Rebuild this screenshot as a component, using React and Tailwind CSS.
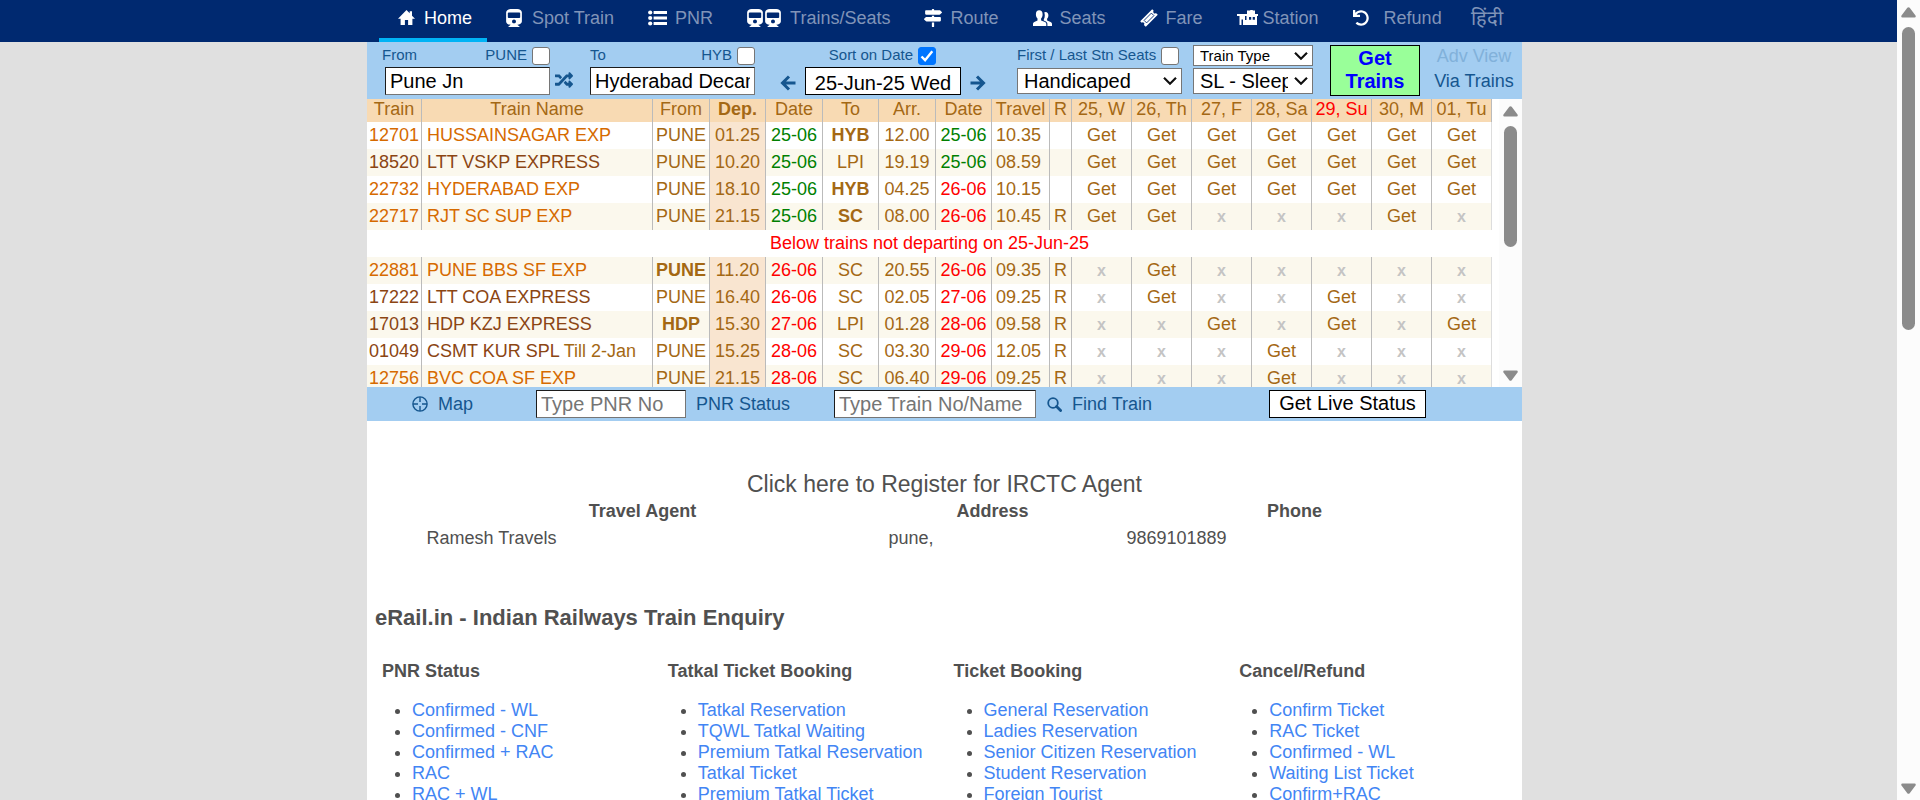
import React from "react";
import { FaTrain, FaMapSigns, FaRandom, FaUndo } from "react-icons/fa";

const HomeIcon = () => (
  <svg width="17" height="16" viewBox="0 0 17 16" fill="currentColor" aria-hidden="true">
    <path d="M8.5 0 0 8.8h2.6V15h4.3v-5h3.2v5h4.3V8.8H17l-3-3.1V1.2h-2.3v2.1z" />
  </svg>
);

const ListIcon = () => (
  <svg width="20" height="16" viewBox="0 0 20 16" fill="currentColor" aria-hidden="true">
    <circle cx="2.2" cy="2.5" r="2.1" />
    <circle cx="2.2" cy="8" r="2.1" />
    <circle cx="2.2" cy="13.500" r="2.1" />
    <path d="M5.6 1h13.4v3H5.6zM5.6 6.500h13.4v3H5.6zM5.6 12h13.4V15H5.6z" />
  </svg>
);

const TrainIcon = () => <FaTrain className="h-[18px] w-4" aria-hidden="true" />;

const UsersIcon = () => (
  <svg width="19" height="17" viewBox="0 0 19 17" fill="currentColor" aria-hidden="true">
    <path d="M12.600 2c1.700 0 2.800 1.300 2.800 3.300 0 1.600-.5 2.700-1.300 3.500v1.700l3.500 1.500c.9.500 1.400 1.100 1.400 2.100V16h-4.600v-2c0-1.200-.7-2.100-1.900-2.700l-1.700-.8V9.300c.6-1 1-2.300 1-3.900 0-1.100-.2-2-.6-2.800.4-.4.900-.6 1.400-.6z" />
    <path d="M6.200.2c2.200 0 3.400 1.600 3.400 4 0 2-.6 3.500-1.500 4.400v1.900l3.900 1.600c.9.500 1.300 1.100 1.300 2.100V16H0v-1.800c0-1 .4-1.600 1.300-2.100l3.200-1.600V8.600C3.500 7.700 2.900 6.200 2.900 4.200 2.900 1.800 4.100.2 6.200.2z" />
  </svg>
);

const TicketIcon = () => (
  <svg width="18" height="18" viewBox="0 0 18 18" fill="none" aria-hidden="true">
    <path fill="currentColor" d="M12.200.2l1.500 1.500a1.500 1.500 0 0 0 2.200 2.200l1.900 1.900L5.800 17.800l-1.900-1.900a1.500 1.500 0 0 0-2.200-2.200L.2 12.200z" />
    <path stroke="#002970" strokeWidth=".9" d="M11.400 4.100l2.500 2.500-7.300 7.300-2.500-2.500z" />
  </svg>
);

const StationIcon = () => (
  <svg width="21" height="16" viewBox="0 0 21 16" fill="currentColor" aria-hidden="true">
    <path d="M10 .5h3l.5-.5h2l.500.500H18V4h3v2H0V4h10z" />
    <path d="M2.500 6H8v9H6V9.500H4.500V15h-2z" />
    <path fillRule="evenodd" d="M9.500 6H20v9H8v-5h1.500zM12 7v2.800h2.200V7zm3.700 0v2.800h2.200V7z" />
  </svg>
);

const TargetIcon = () => (
  <svg width="16" height="16" viewBox="0 0 16 16" fill="none" stroke="currentColor" strokeWidth="1.400" aria-hidden="true">
    <circle cx="8" cy="8" r="7.100" />
    <path d="M8 1v5M8 10v5M1 8h5M10 8h5" />
  </svg>
);

const SearchIcon = () => (
  <svg width="15" height="15" viewBox="0 0 15 15" fill="none" stroke="currentColor" aria-hidden="true">
    <circle cx="6" cy="6" r="4.800" strokeWidth="1.800" />
    <path d="M9.600 9.600l4 4" strokeWidth="2.800" strokeLinecap="round" />
  </svg>
);

const ArrowIcon = ({ d }) => (
  <svg width="16" height="16" viewBox="0 0 16 16" fill="none" stroke="currentColor" strokeWidth="3" aria-hidden="true">
    <path d={d} />
  </svg>
);

const NAV = [
  { label: "Home", box: "w-[26px]", icon: <HomeIcon />, active: true },
  { label: "Spot Train", box: "w-[26px]", icon: <TrainIcon /> },
  { label: "PNR", box: "w-[27px]", icon: <ListIcon /> },
  { label: "Trains/Seats", box: "w-[43px]", icon: <><TrainIcon /><TrainIcon /></> },
  { label: "Route", box: "w-[26px]", icon: <FaMapSigns className="size-[18px]" aria-hidden="true" /> },
  { label: "Seats", box: "w-[27px]", icon: <UsersIcon /> },
  { label: "Fare", box: "w-[26px]", icon: <TicketIcon /> },
  { label: "Station", box: "w-[26px]", icon: <StationIcon /> },
  { label: "Refund", box: "w-[31px]", icon: <FaUndo className="size-4" aria-hidden="true" /> },
];

const DAYS = ["25, W", "26, Th", "27, F", "28, Sa", "29, Su", "30, M", "01, Tu"];

const TRAINS = [
  { no: "12701", name: "HUSSAINSAGAR EXP", sf: true, from: "PUNE", dep: "01.25", d1: "25-06", to: "HYB", toB: true, arr: "12.00", d2: "25-06", t: "10.35", r: "", days: "1111111" },
  { no: "18520", name: "LTT VSKP EXPRESS", from: "PUNE", dep: "10.20", d1: "25-06", to: "LPI", arr: "19.19", d2: "25-06", t: "08.59", r: "", days: "1111111" },
  { no: "22732", name: "HYDERABAD EXP", sf: true, from: "PUNE", dep: "18.10", d1: "25-06", to: "HYB", toB: true, arr: "04.25", d2: "26-06", t: "10.15", r: "", days: "1111111" },
  { no: "22717", name: "RJT SC SUP EXP", sf: true, from: "PUNE", dep: "21.15", d1: "25-06", to: "SC", toB: true, arr: "08.00", d2: "26-06", t: "10.45", r: "R", days: "1100010" },
  null,
  { no: "22881", name: "PUNE BBS SF EXP", sf: true, from: "PUNE", fromB: true, dep: "11.20", d1: "26-06", to: "SC", arr: "20.55", d2: "26-06", t: "09.35", r: "R", days: "0100000" },
  { no: "17222", name: "LTT COA EXPRESS", from: "PUNE", dep: "16.40", d1: "26-06", to: "SC", arr: "02.05", d2: "27-06", t: "09.25", r: "R", days: "0100100" },
  { no: "17013", name: "HDP KZJ EXPRESS", from: "HDP", fromB: true, dep: "15.30", d1: "27-06", to: "LPI", arr: "01.28", d2: "28-06", t: "09.58", r: "R", days: "0010101" },
  { no: "01049", name: "CSMT KUR SPL", note: "Till 2-Jan", from: "PUNE", dep: "15.25", d1: "28-06", to: "SC", arr: "03.30", d2: "29-06", t: "12.05", r: "R", days: "0001000" },
  { no: "12756", name: "BVC COA SF EXP", sf: true, from: "PUNE", dep: "21.15", d1: "28-06", to: "SC", arr: "06.40", d2: "29-06", t: "09.25", r: "R", days: "0001000" },
];

const LINKS = [
  { title: "PNR Status", items: ["Confirmed - WL", "Confirmed - CNF", "Confirmed + RAC", "RAC", "RAC + WL"] },
  { title: "Tatkal Ticket Booking", items: ["Tatkal Reservation", "TQWL Tatkal Waiting", "Premium Tatkal Reservation", "Tatkal Ticket", "Premium Tatkal Ticket"] },
  { title: "Ticket Booking", items: ["General Reservation", "Ladies Reservation", "Senior Citizen Reservation", "Student Reservation", "Foreign Tourist"] },
  { title: "Cancel/Refund", items: ["Confirm Ticket", "RAC Ticket", "Confirmed - WL", "Waiting List Ticket", "Confirm+RAC"] },
];

function Check({ children, checked = false }) {
  return (
    <label className="flex items-center gap-[5px]">
      <span>{children}</span>
      <span className="relative block size-[18px]">
        <input
          type="checkbox"
          defaultChecked={checked}
          className="peer block size-[18px] appearance-none rounded-[3px] border border-[#767676] bg-white checked:border-[#0075ff] checked:bg-[#0075ff]"
        />
        <svg viewBox="0 0 18 18" fill="none" stroke="#fff" strokeWidth="2.400" className="pointer-events-none absolute inset-0 hidden size-[18px] peer-checked:block" aria-hidden="true">
          <path d="M3.500 9.500l3.600 3.700 7.200-9" />
        </svg>
      </span>
    </label>
  );
}

function Select({ label, value, className }) {
  return (
    <span className="relative block w-full">
      <select aria-label={label} defaultValue={value} className={`block w-full appearance-none border border-[#767676] bg-white py-0 pl-[6px] pr-6 text-black ${className}`}>
        <option>{value}</option>
      </select>
      <svg viewBox="0 0 14 9" fill="none" stroke="#111" strokeWidth="2.200" className="pointer-events-none absolute right-[5px] top-1/2 h-[9px] w-[14px] -translate-y-1/2" aria-hidden="true">
        <path d="M1 1.200l6 6 6-6" />
      </svg>
    </span>
  );
}

function ScrollBar({ thumb, className }) {
  return (
    <div aria-hidden="true" className={`flex w-[23px] shrink-0 flex-col items-center bg-[#fcfcfc] ${className}`}>
      <svg width="15" height="11" viewBox="0 0 15 11" fill="#8b8b8b" className="mb-[9px] shrink-0">
        <path d="M6.300.8q1.200-1.200 2.400 0L14.500 8.600q.8 1.900-1 1.900H1.500q-1.800 0-1-1.900z" />
      </svg>
      <div className={`w-[13px] shrink-0 rounded-full bg-[#8b8b8b] ${thumb}`} />
      <svg width="15" height="11" viewBox="0 0 15 11" fill="#8b8b8b" className="mt-auto shrink-0">
        <path d="M6.300 10.200q1.200 1.200 2.400 0L14.500 2.400q.8-1.900-1-1.900H1.500q-1.800 0-1 1.900z" />
      </svg>
    </div>
  );
}

const FIELD = "block h-7 w-full border border-[#767676] border-l-[#1c1c1c] border-t-[#1c1c1c] bg-white px-1 text-[20px] text-black placeholder:text-[#757575]";
const LABEL_ROW = "flex h-[25px] items-center whitespace-nowrap pt-[2px]";

function NavBar() {
  return (
    <nav className="flex h-[42px] justify-center bg-[#002970] pr-2 text-[18px]">
      <div className="flex w-full max-w-[1155px] pl-3">
        {NAV.map((n) => (
          <a
            key={n.label}
            href="#"
            className={`flex items-center whitespace-nowrap border-b-4 pl-[19px] pr-[15px] pb-[2px] ${n.active ? "border-[#00b3f5] text-white" : "border-transparent text-[#8094b8]"}`}
          >
            <span className={`flex gap-[2px] text-white ${n.box}`}>{n.icon}</span>
            {n.label}
          </a>
        ))}
        <a href="#" lang="hi" className="flex items-center pb-[6px] pl-[14px] text-[20px] text-[#8094b8]">हिंदी</a>
      </div>
    </nav>
  );
}

function SearchForm() {
  return (
    <form className="flex bg-[#a3cdf1] pb-[3px] pl-[15px] pr-2 text-[15px] text-[#15568f]">
      <div className="w-[168px]">
        <div className={`${LABEL_ROW} justify-between`}>
          <label htmlFor="from">From</label>
          <Check>PUNE</Check>
        </div>
        <div className="pl-[3px]">
          <input id="from" defaultValue="Pune Jn" className={FIELD} />
        </div>
      </div>
      <button type="button" aria-label="Swap stations" className="ml-[5px] mr-[17px] mt-[25px] flex h-[26px] w-[18px] items-center">
        <FaRandom className="size-[18px]" />
      </button>
      <div className="w-[165px]">
        <div className={`${LABEL_ROW} justify-between`}>
          <label htmlFor="to">To</label>
          <Check>HYB</Check>
        </div>
        <input id="to" defaultValue="Hyderabad Decan" className={FIELD} />
      </div>
      <div className="ml-[25px] w-[206px]">
        <div className={`${LABEL_ROW} justify-end pr-[50px]`}>
          <Check checked>Sort on Date</Check>
        </div>
        <div className="flex items-center">
          <button type="button" aria-label="Previous day" className="w-[25px] pt-[3px]"><ArrowIcon d="M9 1.500 2.500 8 9 14.500M3 8h12.500" /></button>
          <input type="button" value="25-Jun-25 Wed" className="h-7 w-[156px] border border-black bg-white pb-[2px] text-center text-[20px] text-black" />
          <button type="button" aria-label="Next day" className="pl-[9px] pt-[3px]"><ArrowIcon d="M7 1.500 13.500 8 7 14.500M13 8H.5" /></button>
        </div>
      </div>
      <div className="ml-[31px] w-[165px]">
        <div className={LABEL_ROW}>
          <Check>First / Last Stn Seats</Check>
        </div>
        <div className="pt-[1px]">
          <Select label="Quota" value="Handicaped" className="h-[26px] text-[20px] leading-[22px]" />
        </div>
      </div>
      <div className="ml-[11px] flex w-[120px] flex-col gap-[2px] pt-[3px]">
        <Select label="Train type" value="Train Type" className="h-[21px] text-[15px] leading-[18px]" />
        <Select label="Class" value="SL - Sleeper" className="h-[26px] text-[20px] leading-[22px]" />
      </div>
      <button type="button" className="ml-[17px] mt-[3px] h-[51px] w-[90px] border border-black bg-[#99ff99] pb-[2px] text-[20px] font-bold leading-[23px] text-[#0000ff]">
        Get Trains
      </button>
      <div className="ml-auto flex w-[80px] flex-col whitespace-nowrap text-center text-[18px] leading-[25px]">
        <a href="#" className="pt-[2px] text-[#81b1da]">Adv View</a>
        <a href="#">Via Trains</a>
      </div>
    </form>
  );
}

const CELL = "border-r border-[#bbb] p-0 text-center";
const dateTone = (d) => (d === "25-06" ? "text-[#008000]" : "text-[#ff0000]");

function TrainTable() {
  return (
    <section className="flex h-72 overflow-hidden bg-white">
      <div className="min-w-0 flex-1 overflow-hidden">
        <table className="w-[1125px] table-fixed border-separate border-spacing-0 whitespace-nowrap text-[18px] leading-[27px] text-[#a46814]">
          <colgroup>
            <col className="w-[55px]" /><col className="w-[231px]" /><col className="w-[57px]" />
            <col className="w-[56px]" /><col className="w-[57px]" /><col className="w-[56px]" />
            <col className="w-[57px]" /><col className="w-[56px]" /><col className="w-[58px]" />
            <col className="w-[22px]" />
            {DAYS.map((d) => <col key={d} className="w-[60px]" />)}
          </colgroup>
          <thead className="bg-[#f8dab3] leading-[20px]">
            <tr>
              {["Train", "Train Name", "From", "Dep.", "Date", "To", "Arr.", "Date", "Travel", "R", ...DAYS].map((h, i) => (
                <th key={i} scope="col" className={`${CELL} pb-[3px] ${h === "Dep." ? "font-bold" : "font-normal"} ${h === "29, Su" ? "text-[#ff0000]" : ""}`}>{h}</th>
              ))}
            </tr>
          </thead>
          <tbody>
            {TRAINS.map((t, i) =>
              t === null ? (
                <tr key={i}>
                  <td colSpan={17} className="p-0 text-center text-[#ff0000]">Below trains not departing on 25-Jun-25</td>
                </tr>
              ) : (
                <tr key={i} className={i % 2 ? "bg-[#fbf8ed]" : "bg-white"}>
                  <td className={`${CELL} ${t.sf ? "text-[#d66a00]" : "text-[#8b4513]"}`}>{t.no}</td>
                  <td className="border-r border-[#bbb] p-0 pl-[5px] text-left">
                    <a href="#" className={t.sf ? "text-[#d66a00]" : "text-[#8b4513]"}>{t.name}</a>{t.note && ` ${t.note}`}
                  </td>
                  <td className={`${CELL} ${t.fromB ? "font-bold" : ""}`}>{t.from}</td>
                  <td className={`${CELL} bg-[#f9e5d0]`}>{t.dep}</td>
                  <td className={`${CELL} ${dateTone(t.d1)}`}>{t.d1}</td>
                  <td className={`${CELL} ${t.toB ? "font-bold" : ""}`}>{t.to}</td>
                  <td className={CELL}>{t.arr}</td>
                  <td className={`${CELL} ${dateTone(t.d2)}`}>{t.d2}</td>
                  <td className={`${CELL} pr-1`}>{t.t}</td>
                  <td className={CELL}>{t.r}</td>
                  {DAYS.map((d, k) => (
                    <td key={d} className={`${CELL} last:border-[#ddd]`}>
                      {t.days[k] === "1" ? <a href="#">Get</a> : <span className="text-[16px] font-bold text-[#c4c4c4]">x</span>}
                    </td>
                  ))}
                </tr>
              )
            )}
          </tbody>
        </table>
      </div>
      <ScrollBar thumb="h-[121px]" className="pb-[6px] pt-[7px]" />
    </section>
  );
}

function ToolBar() {
  return (
    <div className="flex h-[34px] items-center bg-[#a3cdf1] pl-[45px] text-[18px] text-[#15568f]">
      <a href="#" className="flex w-[124px] items-center gap-[10px]"><TargetIcon />Map</a>
      <div className="w-[150px]"><input aria-label="PNR number" placeholder="Type PNR No" className={FIELD} /></div>
      <a href="#" className="w-[148px] pl-[10px]">PNR Status</a>
      <div className="w-[202px]"><input aria-label="Train number or name" placeholder="Type Train No/Name" className={FIELD} /></div>
      <a href="#" className="flex w-[233px] items-center gap-[10px] pl-[11px]"><SearchIcon />Find Train</a>
      <button type="button" className="h-7 w-[157px] border border-black bg-white pb-[2px] text-[20px] leading-[24px] text-black">Get Live Status</button>
    </div>
  );
}

export default function App() {
  return (
    <div className="flex h-screen overflow-hidden bg-[#e0e0e0] font-['Liberation_Sans',Arial,sans-serif]">
      <div className="min-w-0 flex-1">
        <NavBar />
        <div className="flex justify-center pr-2">
          <main className="w-full max-w-[1155px] bg-white text-[18px] text-[#505050]">
            <SearchForm />
            <TrainTable />
            <ToolBar />
            <section className="pt-[50px]">
              <a href="#" className="block text-center text-[23px] leading-[27px]">Click here to Register for IRCTC Agent</a>
              <table className="mx-auto w-[1066px] table-fixed leading-[27px]">
                <colgroup><col className="w-[462px]" /><col className="w-[238px]" /><col /></colgroup>
                <thead>
                  <tr>
                    <th scope="col" className="px-[15px]">Travel Agent</th>
                    <th scope="col" className="px-[15px]">Address</th>
                    <th scope="col" className="px-[15px]">Phone</th>
                  </tr>
                </thead>
                <tbody>
                  <tr>
                    <td className="px-[15px]">Ramesh Travels</td>
                    <td className="px-[15px]">pune,</td>
                    <td className="px-[15px]">9869101889</td>
                  </tr>
                </tbody>
              </table>
            </section>
            <section className="pl-2 pr-1 pt-[53px]">
              <h1 className="text-[22px] font-bold leading-[26px]">eRail.in - Indian Railways Train Enquiry</h1>
              <div className="grid grid-cols-4 pt-[30px]">
                {LINKS.map((g) => (
                  <div key={g.title} className="pl-[7px]">
                    <h2 className="font-bold leading-[21px]">{g.title}</h2>
                    <ul className="list-disc pl-[30px] pt-[18px] leading-[21px]">
                      {g.items.map((l) => (
                        <li key={l}><a href="#" className="text-[#4285f4]">{l}</a></li>
                      ))}
                    </ul>
                  </div>
                ))}
              </div>
            </section>
          </main>
        </div>
      </div>
      <ScrollBar thumb="h-[303px]" className="pb-[6px] pt-[7px]" />
    </div>
  );
}
